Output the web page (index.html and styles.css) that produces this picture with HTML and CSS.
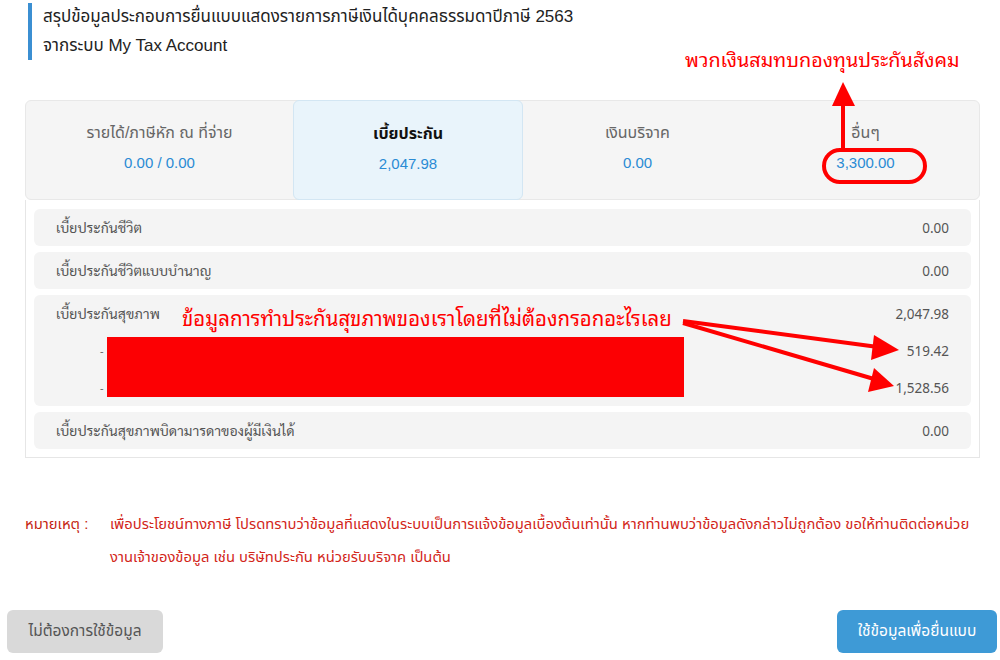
FILE: index.html
```html
<!DOCTYPE html>
<html lang="th">
<head>
<meta charset="utf-8">
<title>My Tax Account</title>
<link rel="stylesheet" href="styles.css">
</head>
<body>
<div class="page">
  <div class="heading">
    <div>สรุปข้อมูลประกอบการยื่นแบบแสดงรายการภาษีเงินได้บุคคลธรรมดาปีภาษี 2563</div>
    <div>จากระบบ My Tax Account</div>
  </div>

  <div class="main">
    <div class="tabs">
      <div class="tab">
        <div class="tab-title">รายได้/ภาษีหัก ณ ที่จ่าย</div>
        <div class="tab-value">0.00 / 0.00</div>
      </div>
      <div class="tab active">
        <div class="tab-title">เบี้ยประกัน</div>
        <div class="tab-value">2,047.98</div>
      </div>
      <div class="tab">
        <div class="tab-title">เงินบริจาค</div>
        <div class="tab-value">0.00</div>
      </div>
      <div class="tab">
        <div class="tab-title">อื่นๆ</div>
        <div class="tab-value">3,300.00</div>
      </div>
    </div>

    <div class="details">
      <div class="row">
        <div class="line"><span>เบี้ยประกันชีวิต</span><span>0.00</span></div>
      </div>
      <div class="row">
        <div class="line"><span>เบี้ยประกันชีวิตแบบบำนาญ</span><span>0.00</span></div>
      </div>
      <div class="row">
        <div class="line"><span>เบี้ยประกันสุขภาพ</span><span>2,047.98</span></div>
        <div class="line sub"><span class="dash">-</span><span>519.42</span></div>
        <div class="line sub"><span class="dash">-</span><span>1,528.56</span></div>
      </div>
      <div class="row">
        <div class="line"><span>เบี้ยประกันสุขภาพบิดามารดาของผู้มีเงินได้</span><span>0.00</span></div>
      </div>
    </div>
  </div>

  <div class="note">
    <div class="note-label">หมายเหตุ :</div>
    <div class="note-text">เพื่อประโยชน์ทางภาษี โปรดทราบว่าข้อมูลที่แสดงในระบบเป็นการแจ้งข้อมูลเบื้องต้นเท่านั้น หากท่านพบว่าข้อมูลดังกล่าวไม่ถูกต้อง ขอให้ท่านติดต่อหน่วยงานเจ้าของข้อมูล เช่น บริษัทประกัน หน่วยรับบริจาค เป็นต้น</div>
  </div>

  <div class="actions">
    <button class="btn btn-gray">ไม่ต้องการใช้ข้อมูล</button>
    <button class="btn btn-blue">ใช้ข้อมูลเพื่อยื่นแบบ</button>
  </div>

  <div class="redact"></div>
  <div class="anno anno-top">พวกเงินสมทบกองทุนประกันสังคม</div>
  <div class="anno anno-mid">ข้อมูลการทำประกันสุขภาพของเราโดยที่ไม่ต้องกรอกอะไรเลย</div>
  <svg class="marks" width="1000" height="660" viewBox="0 0 1000 660">
    <rect x="824" y="150" width="101" height="32" rx="16" ry="16" fill="none" stroke="#ff0000" stroke-width="4"/>
    <line x1="843" y1="150" x2="843" y2="104" stroke="#ff0000" stroke-width="4"/>
    <polygon points="843,82 832,106 855,106" fill="#ff0000"/>
    <line x1="683" y1="321" x2="878" y2="347" stroke="#ff0000" stroke-width="4"/>
    <polygon points="899,350 874,335 871,360" fill="#ff0000"/>
    <line x1="683" y1="323" x2="874" y2="379" stroke="#ff0000" stroke-width="4"/>
    <polygon points="894,386 874,368 868,392" fill="#ff0000"/>
  </svg>
</div>
</body>
</html>
```

FILE: styles.css
```css
* { box-sizing: border-box; }
body {
  margin: 0;
  background: #ffffff;
  font-family: "Liberation Sans", "Noto Sans Thai", sans-serif;
  color: #333;
}
.page {
  position: relative;
  width: 1000px;
  height: 660px;
  overflow: hidden;
}
.heading {
  margin: 3px 0 0 28px;
  border-left: 4px solid #3b8fd2;
  padding-left: 11px;
  font-size: 17px;
  line-height: 28.5px;
  color: #222;
}
.main {
  margin: 40px 20px 0 25px;
}
.tabs {
  display: grid;
  grid-template-columns: 267px 230px 229px 1fr;
  height: 100px;
  background: #f5f5f5;
  border: 1px solid #e8e8e8;
  border-radius: 6px;
}
.tab {
  display: flex;
  flex-direction: column;
  align-items: center;
  padding-top: 19px;
  border-radius: 6px;
}
.tab.active {
  background: #e9f4fb;
  border: 1px solid #d3e6f3;
  margin: -1px 0;
  padding-top: 20px;
}
.tab-title {
  font-size: 16px;
  line-height: 26px;
  color: #666;
}
.tab.active .tab-title {
  color: #111;
  font-weight: bold;
}
.tab-value {
  margin-top: 7px;
  font-size: 15px;
  line-height: 20px;
  color: #2a8bd4;
}
.details {
  border: 1px solid #e6e6e6;
  border-top: none;
  padding: 9px 8px 8px 8px;
  display: flex;
  flex-direction: column;
  gap: 6px;
}
.row {
  background: #f4f4f4;
  border-radius: 6px;
}
.line {
  display: flex;
  justify-content: space-between;
  align-items: center;
  height: 37px;
  padding: 0 22px;
  font-family: "Noto Sans", "Sarabun", sans-serif;
  font-size: 14px;
  color: #555;
}
.line span + span {
  font-size: 13.5px;
}
.line.sub {
  padding-left: 66px;
}
.line .dash {
  font-size: 11px;
  color: #666;
}
.note {
  display: flex;
  margin: 50px 12px 0 25px;
  color: #d2261a;
  font-size: 14.8px;
  line-height: 33px;
}
.note-label {
  flex: 0 0 85px;
  color: #c51f14;
}
.note-text {
  flex: 1;
}
.actions {
  display: flex;
  justify-content: space-between;
  margin-top: 36px;
  padding: 0 3px 0 7px;
}
.btn {
  height: 43px;
  border: none;
  border-radius: 6px;
  font-family: inherit;
  font-size: 15.5px;
}
.btn-gray {
  width: 156px;
  background: #d9d9d9;
  color: #555;
}
.btn-blue {
  width: 160px;
  background: #3e9ad6;
  color: #fff;
}
.redact {
  position: absolute;
  left: 107px;
  top: 337px;
  width: 577px;
  height: 60px;
  background: #fc0003;
}
.anno {
  position: absolute;
  color: #ff0000;
  white-space: nowrap;
  font-family: "Noto Sans", "Noto Sans Thai Looped", sans-serif;
}
.anno-top {
  left: 685px;
  top: 46px;
  font-size: 19.8px;
  line-height: 28px;
}
.anno-mid {
  left: 182px;
  top: 303px;
  font-size: 20.4px;
  line-height: 30px;
}
.marks {
  position: absolute;
  left: 0;
  top: 0;
  pointer-events: none;
}
```
